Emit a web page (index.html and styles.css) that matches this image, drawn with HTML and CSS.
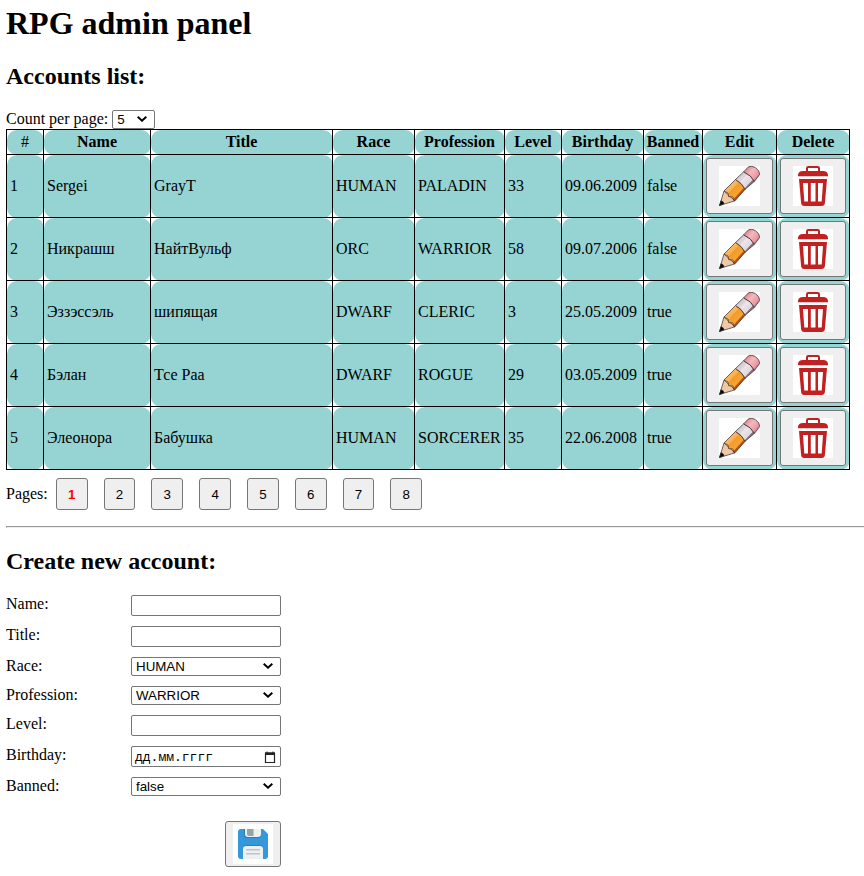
FILE: index.html
```html
<!DOCTYPE html>
<html lang="ru">
<head>
<meta charset="utf-8">
<title>RPG admin panel</title>
<link rel="stylesheet" href="styles.css">
</head>
<body>
<svg class="sprite" aria-hidden="true">
  <defs>
    <linearGradient id="wood" x1="10.500" y1="19.500" x2="21" y2="29.500" gradientUnits="userSpaceOnUse">
      <stop offset="0" stop-color="#ffb95a"/><stop offset=".32" stop-color="#f6ae55"/><stop offset=".34" stop-color="#f39b25"/><stop offset=".82" stop-color="#f3a53a"/><stop offset=".84" stop-color="#cf5b0d"/><stop offset="1" stop-color="#a84408"/>
    </linearGradient>
    <linearGradient id="metal" x1="20.500" y1="9.500" x2="31.500" y2="20" gradientUnits="userSpaceOnUse">
      <stop offset="0" stop-color="#d2ccd1"/><stop offset=".3" stop-color="#ddd6db"/><stop offset=".35" stop-color="#ece5e9"/><stop offset=".82" stop-color="#ded7dd"/><stop offset=".84" stop-color="#8b7f84"/><stop offset="1" stop-color="#6d6266"/>
    </linearGradient>
    <linearGradient id="rubber" x1="28" y1="3" x2="39" y2="12.500" gradientUnits="userSpaceOnUse">
      <stop offset="0" stop-color="#e58e95"/><stop offset=".35" stop-color="#f4b8bc"/><stop offset=".78" stop-color="#ea9aa2"/><stop offset="1" stop-color="#b5666e"/>
    </linearGradient>
  </defs>
  <symbol id="pencil" viewBox="0 0 41 40">
    <path fill="#fff" d="M0 0h41v40H0z"/>
    <g stroke="#33272a" stroke-width=".7" stroke-linejoin="round">
      <path fill="#edc9a5" d="M5 25 16 34.800.6 39.500z"/>
      <path fill="url(#wood)" d="M5 25 16.500 13.500q6 3 9.700 9.700L16 34.800l-1.400-.5-.6-3.300-4.400-.4-.6-3.600z"/>
      <path fill="url(#metal)" d="m16.500 13.500 8.200-7.700q7.200 3.200 10.800 9.500l-9.300 7.900q-3.700-6.700-9.700-9.700z"/>
      <path fill="url(#rubber)" d="m24.700 5.800 4.800-5q3.300-1.300 6.800.7 4.500 3.200 4.400 7l-5.200 6.800q-3.600-6.300-10.800-9.500z"/>
      <path fill="#050505" d="M1.900 34.800q2.600.3 3.200 2.900L.5 39.500z"/>
    </g>
  </symbol>
  <symbol id="trash" viewBox="0 0 40 40">
    <path fill="#fff" d="M0 0h40v40H0z"/>
    <path fill="none" stroke="#c12121" stroke-width="2" stroke-linejoin="round" d="M14 6V2.200Q14 1 15.200 1h9.600Q26 1 26 2.200V6"/>
    <path fill="#c12121" d="M5 10.200V9q.3-3.800 5-4h20q4.700.2 5 4v1.200zM6 13h28l-2.100 24q-.3 3-3.200 3H11.300q-3 0-3.200-3z"/>
    <path fill="#fff" d="M10 17h5v18.500h-3.700zm7.800 0h4.700v18.500h-4.700zm7.200 0h5l-1.300 18.500H25z"/>
  </symbol>
  <symbol id="floppy" viewBox="0 0 40 40">
    <path fill="#fff" d="M0 0h40v40H0z"/>
    <path fill="#3498db" d="M8 5h22l5 5v22q0 3-3 3H8q-3 0-3-3V8q0-3 3-3z"/>
    <path fill="#2980b9" d="M11 5h17v6q0 3-3 3H14q-3 0-3-3zM10 24q0-3 3-3h14q3 0 3 3v11H10z"/>
    <path fill="#ecf0f1" d="M12 5h16v5q0 3-3 3H15q-3 0-3-3zM10 25q0-3 3-3h14q3 0 3 3v10H10z"/>
    <path fill="#95a5a6" d="M14 5h6v7h-4q-2 0-2-2z"/>
    <path fill="#bdc3c7" d="M20 5h1v7h-1zM13 25h14v1.500H13zm0 4h14v1.500H13z"/>
  </symbol>
</svg>

<h1>RPG admin panel</h1>
<h2>Accounts list:</h2>
<div class="per-page"><label for="count">Count per page:</label>
  <select id="count"><option>5</option><option>10</option><option>20</option></select></div>

<table class="accounts">
  <colgroup><col class="c-id"><col class="c-name"><col class="c-title"><col class="c-race"><col class="c-prof"><col class="c-level"><col class="c-birth"><col class="c-ban"><col class="c-edit"><col class="c-del"></colgroup>
  <thead><tr><td class="num">#</td><th>Name</th><th>Title</th><th>Race</th><th>Profession</th><th>Level</th><th>Birthday</th><th>Banned</th><th>Edit</th><th>Delete</th></tr></thead>
  <tbody>
    <tr><td>1</td><td>Sergei</td><td>GrayT</td><td>HUMAN</td><td>PALADIN</td><td>33</td><td>09.06.2009</td><td>false</td><td><button class="action edit"><svg><use href="#pencil"/></svg></button></td><td><button class="action"><svg><use href="#trash"/></svg></button></td></tr>
    <tr><td>2</td><td>Никрашш</td><td>НайтВульф</td><td>ORC</td><td>WARRIOR</td><td>58</td><td>09.07.2006</td><td>false</td><td><button class="action edit"><svg><use href="#pencil"/></svg></button></td><td><button class="action"><svg><use href="#trash"/></svg></button></td></tr>
    <tr><td>3</td><td>Эззэссэль</td><td>шипящая</td><td>DWARF</td><td>CLERIC</td><td>3</td><td>25.05.2009</td><td>true</td><td><button class="action edit"><svg><use href="#pencil"/></svg></button></td><td><button class="action"><svg><use href="#trash"/></svg></button></td></tr>
    <tr><td>4</td><td>Бэлан</td><td>Тсе Раа</td><td>DWARF</td><td>ROGUE</td><td>29</td><td>03.05.2009</td><td>true</td><td><button class="action edit"><svg><use href="#pencil"/></svg></button></td><td><button class="action"><svg><use href="#trash"/></svg></button></td></tr>
    <tr><td>5</td><td>Элеонора</td><td>Бабушка</td><td>HUMAN</td><td>SORCERER</td><td>35</td><td>22.06.2008</td><td>true</td><td><button class="action edit"><svg><use href="#pencil"/></svg></button></td><td><button class="action"><svg><use href="#trash"/></svg></button></td></tr>
  </tbody>
</table>

<div class="pages"><span>Pages:</span>
  <button class="current">1</button><button>2</button><button>3</button><button>4</button><button>5</button><button>6</button><button>7</button><button>8</button>
</div>
<hr>

<h2>Create new account:</h2>
<form class="create">
  <label for="name">Name:</label><input id="name" type="text">
  <label for="title">Title:</label><input id="title" type="text">
  <label for="race">Race:</label><select id="race"><option>HUMAN</option><option>DWARF</option><option>ORC</option></select>
  <label for="prof">Profession:</label><select id="prof"><option>WARRIOR</option><option>ROGUE</option><option>CLERIC</option></select>
  <label for="level">Level:</label><input id="level" type="text">
  <span>Birthday:</span><div class="date"><span>дд.мм.гггг</span><svg viewBox="0 0 12 13"><path d="M1.500 2h9v9.500h-9z" fill="none" stroke="#222" stroke-width="1.200"/><path d="M1 1.500h10V4H1zM2.500.5h1v1h-1zm6 0h1v1h-1z" fill="#222"/></svg></div>
  <label for="banned">Banned:</label><select id="banned"><option>false</option><option>true</option></select>
  <button class="save" type="button"><svg><use href="#floppy"/></svg></button>
</form>
</body>
</html>
```
FILE: styles.css
```css
* { box-sizing: border-box; }
body {
  margin: 0 0 0 6px;
  font: 16px/18px "Liberation Serif", serif;
  color: #000;
  background: #fff;
  overflow: hidden;
}
.sprite { position: absolute; width: 0; height: 0; }
h1 { margin: 0; padding-top: 5px; font-size: 32px; line-height: 37px; }
h2 { margin: 0; font-size: 24px; line-height: 27px; }
h1 + h2 { margin-top: 21px; }

select, input, .date {
  margin: 0;
  border: 1px solid #767676;
  border-radius: 2px;
  background: #fff;
  color: #000;
  font: 13.333px "Liberation Sans", sans-serif;
}
select {
  appearance: none;
  height: 19px;
  padding: 0 20px 0 4px;
  background: #fff url("data:image/svg+xml,%3Csvg xmlns='http://www.w3.org/2000/svg' width='10' height='6'%3E%3Cpath d='M.7.8 5 4.700 9.300.8' fill='none' stroke='%23000' stroke-width='2'/%3E%3C/svg%3E") no-repeat right 7px top 5px;
}
.per-page { display: flex; gap: 4px; height: 19px; margin-top: 20px; }
.per-page select { width: 43px; }

.accounts {
  width: 844px;
  table-layout: fixed;
  border-collapse: collapse;
}
.accounts th, .accounts td {
  height: 63px;
  padding: 0 0 0 3px;
  border: 1px solid #000;
  border-radius: 10px;
  background: #96d4d4;
  text-align: left;
  white-space: nowrap;
}
.accounts thead th, .accounts thead td { height: 25px; padding: 0; text-align: center; }
.c-id { width: 37px; }
.c-name { width: 107px; }
.c-title { width: 182px; }
.c-race { width: 82px; }
.c-prof { width: 90px; }
.c-level { width: 57px; }
.c-birth { width: 82px; }
.c-ban { width: 59px; }
.c-edit { width: 74px; }
.c-del { width: 73px; }

button {
  display: flex;
  align-items: center;
  justify-content: center;
  margin: 0;
  padding: 0;
  border: 1px solid #767676;
  border-radius: 3px;
  background: #efefef;
  color: #000;
  font: 13.333px "Liberation Sans", sans-serif;
}
button svg { width: 40px; height: 40px; }
.action { width: 66px; height: 56px; }
.edit { width: 67px; }
.edit svg { width: 41px; }

.pages { display: flex; align-items: center; height: 32px; margin-top: 8px; }
.pages span { width: 49.8px; }
.pages button { width: 31.8px; height: 32px; margin-right: 16px; }
.pages .current { color: #f00; font-weight: bold; }
hr { height: 2px; margin: 16px 0 20px; border: solid; border-width: 1px 0 1px 1px; border-color: #9a9a9a #eee #eee #9a9a9a; }

.create {
  display: grid;
  grid-template-columns: 125px 150px;
  row-gap: 10px;
  width: 275px;
  margin-top: 20px;
}
.create input, .date { width: 150px; height: 21px; }
.date {
  display: flex;
  align-items: center;
  justify-content: space-between;
  padding: 1px 4px 0 3px;
  font: 13px "Liberation Mono", monospace;
}
.date svg { width: 12px; height: 13px; }
.save { grid-column: 2; justify-self: end; width: 56px; height: 46px; margin-top: 15px; }
```
